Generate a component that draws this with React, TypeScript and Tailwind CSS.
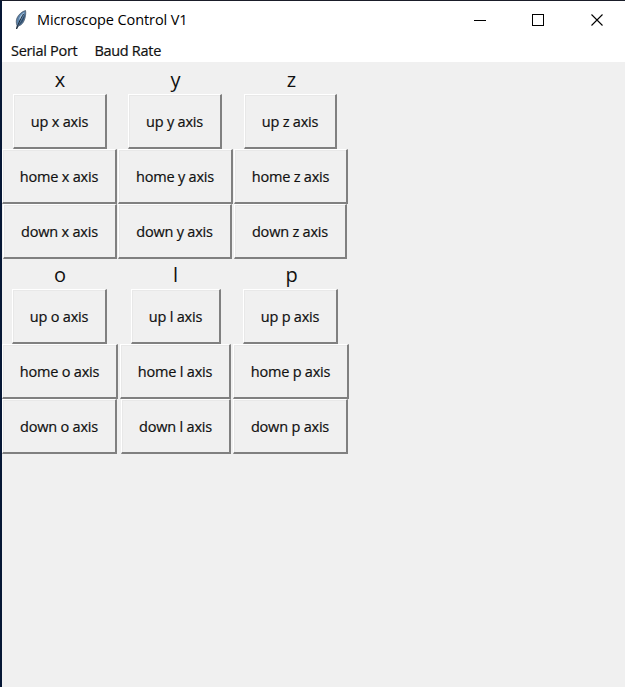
type Cell = { label: string; box: string };
type Axis = { name: string; buttons: Cell[] };

const topAxes: Axis[] = [
  { name: 'x', buttons: [{ label: 'up x axis', box: 'w-[94px]' }, { label: 'home x axis', box: 'w-[115px] mr-px' }, { label: 'down x axis', box: 'w-[114px]' }] },
  { name: 'y', buttons: [{ label: 'up y axis', box: 'w-[94px] mr-px' }, { label: 'home y axis', box: 'w-[115px]' }, { label: 'down y axis', box: 'w-[114px] mr-px' }] },
  { name: 'z', buttons: [{ label: 'up z axis', box: 'w-[93px] mr-0.5' }, { label: 'home z axis', box: 'w-[114px] mr-px' }, { label: 'down z axis', box: 'w-[113px] mr-0.5' }] },
];

const bottomAxes: Axis[] = [
  { name: 'o', buttons: [{ label: 'up o axis', box: 'w-[95px] mr-px' }, { label: 'home o axis', box: 'w-[116px]' }, { label: 'down o axis', box: 'w-[115px] mr-px' }] },
  { name: 'l', buttons: [{ label: 'up l axis', box: 'w-[90px] ml-px' }, { label: 'home l axis', box: 'w-[111px]' }, { label: 'down l axis', box: 'w-[110px] ml-px' }] },
  { name: 'p', buttons: [{ label: 'up p axis', box: 'w-[95px] mr-0.5' }, { label: 'home p axis', box: 'w-[116px] mr-px' }, { label: 'down p axis', box: 'w-[115px] mr-0.5' }] },
];

function TkButton({ label, box }: Cell) {
  return (
    <button
      className={`flex h-[55px] shrink-0 items-center justify-center border-t border-l border-r-2 border-b-2 border-t-white border-l-white border-r-[#808080] border-b-[#808080] bg-[#f0f0f0] pt-[3px] shadow-[inset_1px_1px_0_#e8e8e8] whitespace-nowrap text-[14.5px] leading-none tracking-[-0.2px] [-webkit-text-stroke:0.2px_#111] ${box}`}
    >
      {label}
    </button>
  );
}

function AxisGroup({ axes }: { axes: Axis[] }) {
  return (
    <div className="grid grid-cols-[116px_115px_117px]">
      {axes.map((axis) => (
        <div key={axis.name} className="flex flex-col items-center">
          <div className="flex h-[30px] items-center pt-0.5 text-[20px] leading-none">{axis.name}</div>
          {axis.buttons.map((b) => (
            <TkButton key={b.label} {...b} />
          ))}
        </div>
      ))}
    </div>
  );
}

function Feather() {
  return (
    <svg width="14" height="20" viewBox="0 0 14 20">
      <path d="M11.500 .5C8 1.500 4.500 4.500 3 8C2 10.500 2 13 3 15.500L2.500 19L4.500 16C8 15 10 12 11 8C11.700 5 12 2.500 11.500 .5Z" fill="#5c83aa" stroke="#3d4c5d" strokeWidth=".7" />
      <path d="M10.500 2C7 4 5.200 7 4.700 11L6 8.500L6.400 10L9 5Z" fill="#a9c6df" />
      <path d="M11 4C10.500 9 8.500 13.500 4.300 15.500L6.500 12Z" fill="#304a66" />
      <path d="M9.500 4C7 8 5 12 2.500 19" fill="none" stroke="#17202b" strokeWidth=".9" />
    </svg>
  );
}

export default function App() {
  return (
    <div className="flex h-[687px] w-[625px] flex-col overflow-hidden border-t border-l-2 border-t-[#1a1d29] border-l-[#061735] bg-[#f0f0f0] font-['Open_Sans','Noto_Sans',sans-serif] text-[#111]">
      <header className="flex h-[38px] shrink-0 items-center bg-white pl-3">
        <Feather />
        <h1 className="ml-[9px] text-[14.5px] leading-none tracking-[-0.1px] whitespace-nowrap text-black">Microscope Control V1</h1>
        <div className="mr-[21px] ml-auto flex gap-[46px]">
          <svg width="12" height="12" shapeRendering="crispEdges"><path d="M0 6.500H12" stroke="#000" /></svg>
          <svg width="12" height="12" shapeRendering="crispEdges"><path d="M.5 .5H11.500V11.500H.5Z" fill="none" stroke="#000" /></svg>
          <svg width="14" height="12"><path d="M1.500 .5L12.500 11.500M12.500 .5L1.500 11.500" fill="none" stroke="#000" strokeWidth="1.100" /></svg>
        </div>
      </header>
      <nav className="flex h-[23px] shrink-0 items-center gap-[17px] bg-white pt-0.5 pl-[9px] text-[14.5px] leading-none tracking-[-0.3px] [-webkit-text-stroke:0.2px_#111]">
        <span>Serial Port</span>
        <span>Baud Rate</span>
      </nav>
      <main className="pt-0.5">
        <AxisGroup axes={topAxes} />
        <AxisGroup axes={bottomAxes} />
      </main>
    </div>
  );
}
